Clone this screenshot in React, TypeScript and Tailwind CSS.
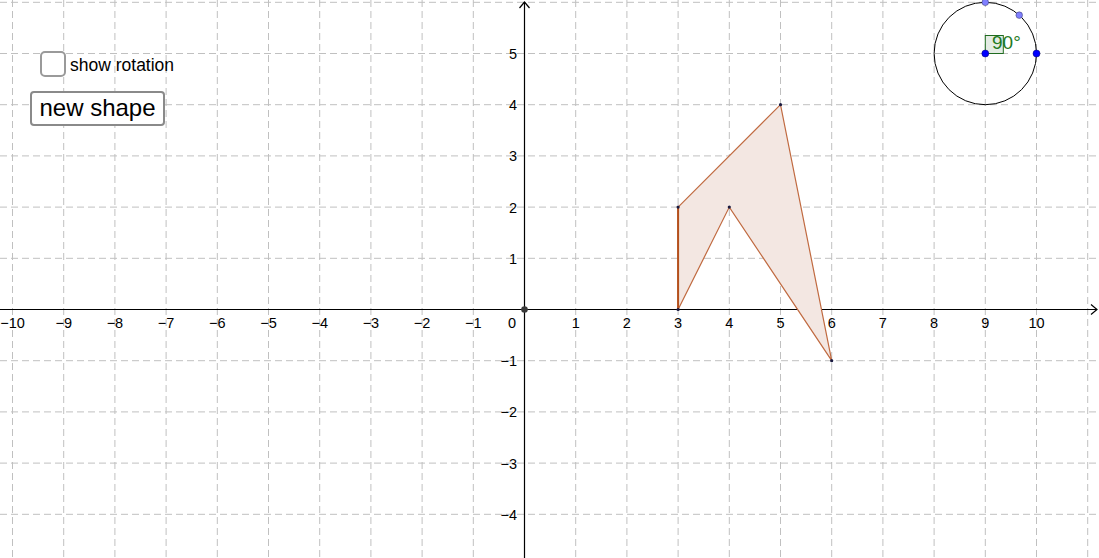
import React from "react";

const W = 1099;
const H = 558;
const OX = 524.5;
const OY = 309.5;
const U = 51.2;

const px = (x: number) => OX + x * U;
const py = (y: number) => OY - y * U;

const shape: [number, number][] = [
  [3, 2],
  [5, 4],
  [6, -1],
  [4, 2],
  [3, 0],
];

function Graph() {
  const xs: number[] = [];
  for (let i = -10; i <= 11; i++) xs.push(i);
  const ys: number[] = [];
  for (let j = -5; j <= 6; j++) ys.push(j);

  const poly = shape.map(([x, y]) => `${px(x)},${py(y)}`).join(" ");

  const cx = px(9);
  const cy = py(5);
  const a = (48.5 * Math.PI) / 180;

  return (
    <svg width={W} height={H} viewBox={`0 0 ${W} ${H}`} className="block">
      {/* grid */}
      <g stroke="#c0c0c0" strokeWidth={1} strokeDasharray="7 4">
        {xs
          .filter((i) => i !== 0)
          .map((i) => (
            <line key={`gx${i}`} x1={px(i)} y1={0} x2={px(i)} y2={H} />
          ))}
        {ys
          .filter((j) => j !== 0)
          .map((j) => (
            <line key={`gy${j}`} x1={0} y1={py(j)} x2={W} y2={py(j)} />
          ))}
      </g>

      {/* axes */}
      <g stroke="#000" strokeWidth={1.2} fill="none">
        <line x1={0} y1={OY} x2={W - 2} y2={OY} />
        <polyline points={`${W - 8},${OY - 5} ${W - 2},${OY} ${W - 8},${OY + 5}`} />
        <line x1={OX} y1={H} x2={OX} y2={2} />
        <polyline points={`${OX - 5},${8} ${OX},${2} ${OX + 5},${8}`} />
      </g>

      {/* axis labels */}
      <g
        fontFamily="'Liberation Sans', Arial, sans-serif"
        fontSize={14.5}
        fill="#000"
      >
        {xs
          .filter((i) => i !== 0 && i <= 10)
          .map((i) => (
            <text key={`lx${i}`} x={px(i)} y={328} textAnchor="middle">
              {i < 0 ? `\u2212${-i}` : i}
            </text>
          ))}
        <text x={512} y={328} textAnchor="middle">
          0
        </text>
        {ys
          .filter((j) => j !== 0 && j >= -4 && j <= 5)
          .map((j) => (
            <text key={`ly${j}`} x={517} y={py(j) + 5.5} textAnchor="end">
              {j < 0 ? `\u2212${-j}` : j}
            </text>
          ))}
      </g>

      {/* polygon */}
      <polygon points={poly} fill="#f3e7e2" stroke="#c06a40" strokeWidth={1.2} />
      <line x1={px(3)} y1={py(0)} x2={px(3)} y2={py(2)} stroke="#b4501c" strokeWidth={2} />
      {shape.map(([x, y]) => (
        <circle key={`v${x}${y}`} cx={px(x)} cy={py(y)} r={1.6} fill="#1a1a40" />
      ))}

      {/* origin point */}
      <circle cx={OX} cy={OY} r={3.3} fill="#3a3a3a" />

      {/* rotation dial */}
      <circle cx={cx} cy={cy} r={U} fill="none" stroke="#000" strokeWidth={1} />
      <rect x={cx} y={cy - 18} width={18} height={18} fill="#e4ece4" stroke="#1f6b1f" strokeWidth={1} />
      <text
        x={992}
        y={48.5}
        fontFamily="'Liberation Sans', Arial, sans-serif"
        fontSize={19}
        fill="#1f7a1f"
      >
        90°
      </text>
      <circle cx={cx} cy={cy} r={3.5} fill="#0000ff" stroke="#000066" strokeWidth={0.5} />
      <circle cx={cx + U} cy={cy} r={3.5} fill="#0000ff" stroke="#000066" strokeWidth={0.5} />
      <circle cx={cx} cy={cy - U} r={3.3} fill="#7f7fff" stroke="#333366" strokeWidth={0.5} />
      <circle
        cx={cx + U * Math.cos(a)}
        cy={cy - U * Math.sin(a)}
        r={3.3}
        fill="#7f7fff"
        stroke="#333366"
        strokeWidth={0.5}
      />
    </svg>
  );
}

export default function App() {
  return (
    <div
      className="relative w-[1099px] h-[558px] overflow-hidden bg-white"
      style={{ fontFamily: "'Liberation Sans', Arial, sans-serif" }}
    >
      <Graph />

      {/* controls over the canvas */}
      <div className="absolute left-[40px] top-[51px] flex items-center gap-[4px]">
        <div className="w-[26px] h-[26px] rounded-[5px] border-2 border-[#9a9a9a] bg-white" />
        <span className="text-[17.5px] leading-none text-black pt-[3px]">show rotation</span>
      </div>
      <button className="absolute left-[30px] top-[91px] w-[135px] h-[35px] rounded-[4px] border-2 border-[#8a8a8a] bg-white text-[24px] leading-none text-black pb-[2px]">
        new shape
      </button>
    </div>
  );
}
